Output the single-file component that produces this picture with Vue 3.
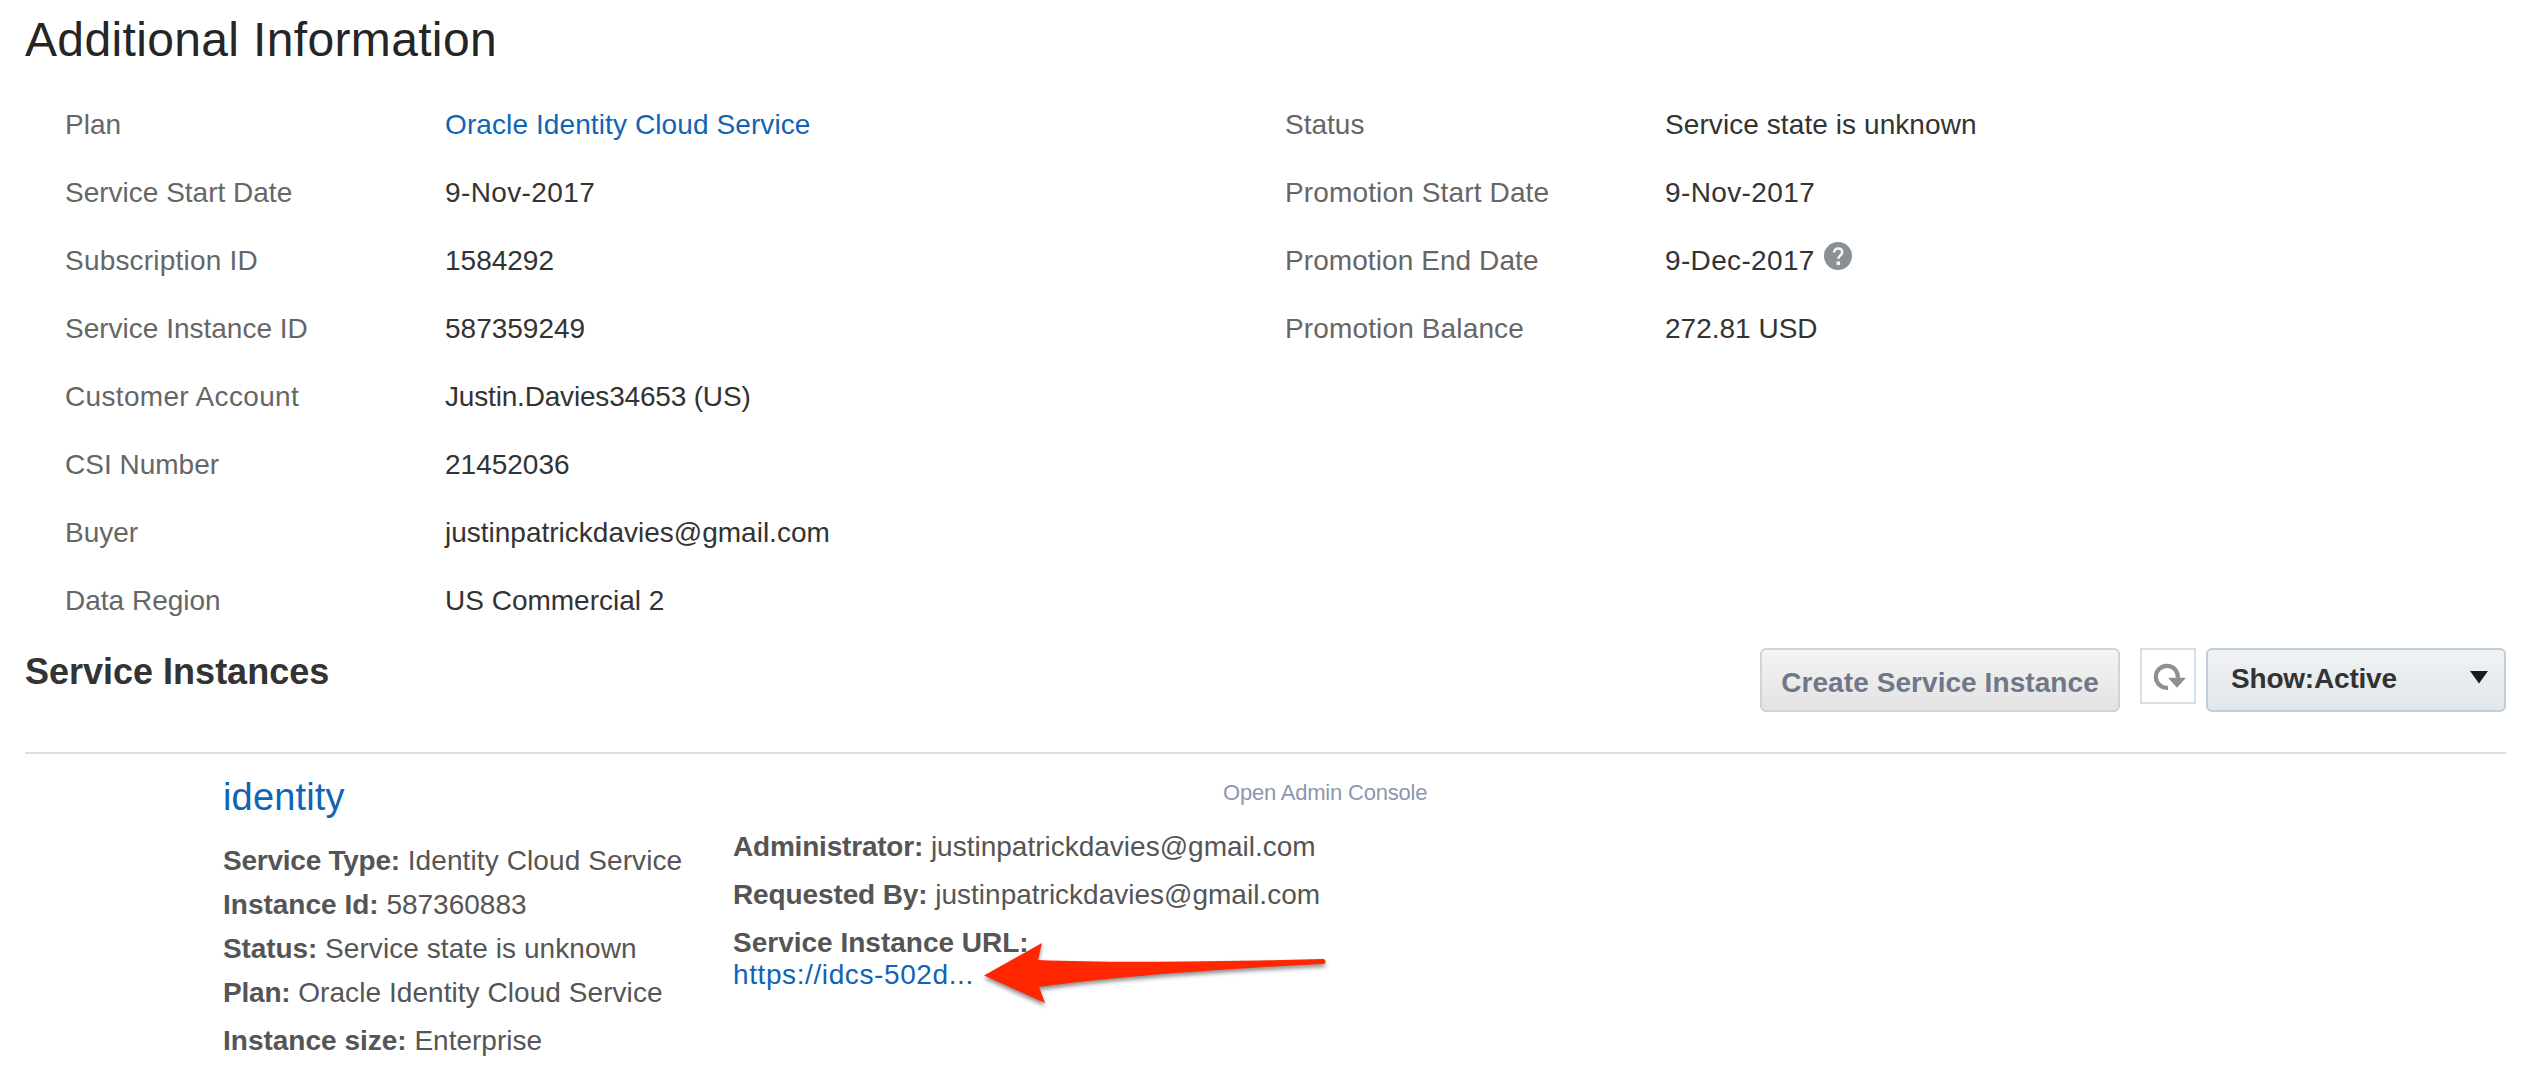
<script setup>
const account = [
  { label: 'Plan', value: 'Oracle Identity Cloud Service', link: true, track: 0.1 },
  { label: 'Service Start Date', value: '9-Nov-2017', track: 0.38 },
  { label: 'Subscription ID', value: '1584292', labelTrack: 0.2 },
  { label: 'Service Instance ID', value: '587359249' },
  { label: 'Customer Account', value: 'Justin.Davies34653 (US)', labelTrack: 0.33, track: -0.18 },
  { label: 'CSI Number', value: '21452036' },
  { label: 'Buyer', value: 'justinpatrickdavies@gmail.com' },
  { label: 'Data Region', value: 'US Commercial 2' },
]
const promotion = [
  { label: 'Status', value: 'Service state is unknown', track: 0.08 },
  { label: 'Promotion Start Date', value: '9-Nov-2017', labelTrack: 0.14, track: 0.38 },
  { label: 'Promotion End Date', value: '9-Dec-2017', help: true, labelTrack: 0.08, track: 0.34 },
  { label: 'Promotion Balance', value: '272.81 USD', labelTrack: 0.14 },
]
const facts = [
  { label: 'Service Type:', value: 'Identity Cloud Service', labelTrack: -0.24, track: 0.1 },
  { label: 'Instance Id:', value: '587360883' },
  { label: 'Status:', value: 'Service state is unknown', labelTrack: -0.1, track: 0.08 },
  { label: 'Plan:', value: 'Oracle Identity Cloud Service', labelTrack: -0.2, track: 0.06 },
  { label: 'Instance size:', value: 'Enterprise' },
]
const contacts = [
  { label: 'Administrator:', value: 'justinpatrickdavies@gmail.com', labelTrack: -0.2 },
  { label: 'Requested By:', value: 'justinpatrickdavies@gmail.com', labelTrack: -0.12 },
]
const spacing = (n = 0) => ({ letterSpacing: `${n}px` })
</script>

<template>
  <main class="page">
    <h1 class="title">Additional Information</h1>

    <section class="info">
      <dl v-for="(group, g) in [account, promotion]" :key="g" class="group">
        <div v-for="row in group" :key="row.label" class="row">
          <dt :style="spacing(row.labelTrack)">{{ row.label }}</dt>
          <dd>
            <span :class="{ link: row.link }" :style="spacing(row.track)">{{ row.value }}</span>
            <svg v-if="row.help" class="help" width="28" height="28" viewBox="0 0 28 28">
              <circle cx="14" cy="14" r="14" fill="#8a9094" />
              <path d="M10 10.6C10 8 11.8 6.6 14.1 6.6c2.4 0 4.1 1.4 4.1 3.6 0 3.1-3.8 3.2-3.8 6.6" fill="none" stroke="#f4f5f5" stroke-width="2.5" />
              <rect x="12.6" y="19.4" width="3.4" height="3.6" fill="#f4f5f5" />
            </svg>
          </dd>
        </div>
      </dl>
    </section>

    <section class="bar">
      <h2 class="heading">Service Instances</h2>
      <div class="tools">
        <button class="create" disabled>Create Service Instance</button>
        <button class="refresh" aria-label="Refresh">
          <svg width="52" height="52" viewBox="0 0 52 52">
            <path d="M26 37.8 A11 11 0 1 1 35.8 28" fill="none" stroke="#8a9094" stroke-width="4.2" />
            <path d="M26 27.8h18L35 37.8z" fill="#8a9094" />
          </svg>
        </button>
        <button class="select">
          <span>Show:Active</span>
          <svg width="18" height="13" viewBox="0 0 18 13"><path d="M0 0h18L9 12.5z" fill="#161b1f" /></svg>
        </button>
      </div>
    </section>

    <section class="instance">
      <div class="summary">
        <a class="link name">identity</a>
        <p v-for="f in facts" :key="f.label" class="fact">
          <b :style="spacing(f.labelTrack)">{{ f.label }}</b>&#32;<span :style="spacing(f.track)">{{ f.value }}</span>
        </p>
      </div>
      <div class="details">
        <div class="console">Open Admin Console</div>
        <p v-for="c in contacts" :key="c.label" class="detail">
          <b :style="spacing(c.labelTrack)">{{ c.label }}</b>&#32;<span>{{ c.value }}</span>
        </p>
        <p class="detail"><b>Service Instance URL:</b><br /><a class="link url">https://idcs-502d...</a></p>
        <svg class="pointer" width="360" height="76" viewBox="0 0 360 76">
          <path d="M4 39.5 62 7 58 24Q150 28 343 23A2.5 2.5 0 0 1 343 28Q160 37 59 51L65 67Z" fill="#ff2600" />
        </svg>
      </div>
    </section>
  </main>
</template>

<style>
body {
  margin: 0;
  background: #fff;
}
</style>

<style scoped>
.page {
  box-sizing: border-box;
  height: 1080px;
  padding: 0 24px 0 25px;
  overflow: hidden;
  font-family: "Liberation Sans", Arial, sans-serif;
  font-size: 28px;
  color: #333;
}
.title {
  margin: 0;
  height: 90px;
  font-size: 48px;
  font-weight: 400;
  line-height: 80px;
  letter-spacing: 0.35px;
  color: #252525;
}
.info {
  display: flex;
  height: 544px;
}
.group {
  box-sizing: border-box;
  width: 1220px;
  margin: 0;
  padding-left: 40px;
}
.row {
  display: flex;
  height: 68px;
  line-height: 69px;
}
dt {
  width: 380px;
  color: #666;
}
dd {
  display: flex;
  margin: 0;
}
.link {
  color: #1064b6;
}
.help {
  margin: 16px 0 0 9px;
}
.bar {
  display: flex;
  justify-content: space-between;
  box-sizing: border-box;
  height: 120px;
  border-bottom: 2px solid #d5dfe7;
}
.heading {
  margin: 0;
  font-size: 36px;
  line-height: 75px;
}
.tools {
  display: flex;
  align-items: flex-start;
  padding-top: 14px;
}
button {
  box-sizing: border-box;
  padding: 0;
  font: bold 28px "Liberation Sans", Arial, sans-serif;
}
.create {
  width: 360px;
  height: 64px;
  margin-right: 20px;
  padding-top: 5px;
  border: 2px solid #d2d3d4;
  border-radius: 6px;
  background: linear-gradient(#f4f4f4, #e3e3e3);
  letter-spacing: 0.07px;
  color: #6f7889;
}
.refresh {
  width: 56px;
  height: 56px;
  margin-right: 10px;
  border: 2px solid #d4dfe8;
  background: #fff;
}
.refresh svg {
  display: block;
}
.select {
  display: flex;
  justify-content: space-between;
  width: 300px;
  height: 64px;
  padding: 0 16px 0 23px;
  border: 2px solid #c2cfda;
  border-radius: 6px;
  background: linear-gradient(#f0f2f4, #e1e6ea);
  line-height: 57px;
  letter-spacing: -0.2px;
  color: #333;
}
.select svg {
  margin-top: 21px;
}
.instance {
  display: flex;
  color: #555;
}
.summary {
  box-sizing: border-box;
  width: 708px;
  padding-left: 198px;
}
.name {
  display: block;
  height: 84px;
  font-size: 38px;
  line-height: 86px;
  letter-spacing: 0.15px;
}
p {
  margin: 0;
}
.fact {
  line-height: 45px;
  height: 44px;
}
.fact:last-child {
  margin-top: 4px;
}
.details {
  position: relative;
  width: 700px;
}
.console {
  height: 69px;
  padding-left: 490px;
  font-size: 22px;
  line-height: 77px;
  letter-spacing: -0.2px;
  color: #8d97b0;
}
.detail {
  padding: 8px 0;
  line-height: 32px;
}
.url {
  letter-spacing: 0.6px;
}
.pointer {
  position: absolute;
  left: 247px;
  top: 182px;
  filter: drop-shadow(0 3px 2px rgba(0, 0, 0, 0.45));
}
</style>
